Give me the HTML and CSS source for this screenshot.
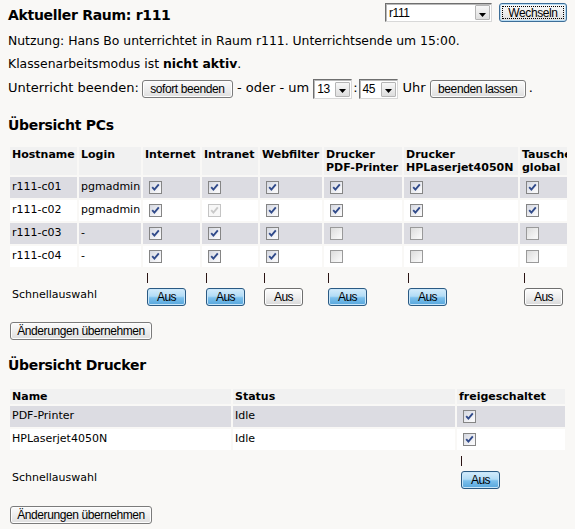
FILE: index.html
```html
<!DOCTYPE html>
<html lang="de">
<head>
<meta charset="utf-8">
<title>Aktueller Raum: r111</title>
<link rel="stylesheet" href="styles.css">
</head>
<body>
<div class="topbar">
  <h1 class="title">Aktueller Raum: r111</h1>
  <form class="roomform">
    <span class="combo combo-room"><span class="combo-text">r111</span><span class="combo-arrow"><svg width="7" height="4" viewBox="0 0 7 4"><path d="M0 0h7L3.5 4z" fill="#000"/></svg></span></span>
    <button type="button" class="btn btn-default">Wechseln</button>
  </form>
</div>
<p class="line line-first">Nutzung: Hans Bo unterrichtet in Raum r111. Unterrichtsende um 15:00.</p>
<p class="line line-second">Klassenarbeitsmodus ist <b>nicht aktiv</b>.</p>
<div class="endrow">
  <span class="txt">Unterricht beenden:</span>
  <button type="button" class="btn btn-end1">sofort beenden</button>
  <span class="txt txt-oder">- oder - um</span>
  <span class="combo combo-time"><span class="combo-text">13</span><span class="combo-arrow"><svg width="7" height="4" viewBox="0 0 7 4"><path d="M0 0h7L3.5 4z" fill="#000"/></svg></span></span>
  <span class="txt txt-colon">:</span>
  <span class="combo combo-time combo-min"><span class="combo-text">45</span><span class="combo-arrow"><svg width="7" height="4" viewBox="0 0 7 4"><path d="M0 0h7L3.5 4z" fill="#000"/></svg></span></span>
  <span class="txt txt-uhr">Uhr</span>
  <button type="button" class="btn btn-end2">beenden lassen</button>
  <span class="txt txt-dot">.</span>
</div>

<h2 class="section">Übersicht PCs</h2>
<table class="grid pcs">
  <thead>
    <tr>
      <th class="c-host">Hostname</th>
      <th class="c-login">Login</th>
      <th class="c-inet">Internet</th>
      <th class="c-intra">Intranet</th>
      <th class="c-web">Webfilter</th>
      <th class="c-pdf">Drucker<br>PDF-Printer</th>
      <th class="c-hp">Drucker<br>HPLaserjet4050N</th>
      <th class="c-tausch">Tauschen<br>global</th>
    </tr>
  </thead>
  <tbody>
    <tr class="odd">
      <td class="t">r111-c01</td><td class="t">pgmadmin</td>
      <td><input type="checkbox" class="cb" checked></td>
      <td><input type="checkbox" class="cb" checked></td>
      <td><input type="checkbox" class="cb" checked></td>
      <td><input type="checkbox" class="cb" checked></td>
      <td><input type="checkbox" class="cb" checked></td>
      <td><input type="checkbox" class="cb" checked></td>
    </tr>
    <tr class="even">
      <td class="t">r111-c02</td><td class="t">pgmadmin</td>
      <td><input type="checkbox" class="cb" checked></td>
      <td><input type="checkbox" class="cb" checked disabled></td>
      <td><input type="checkbox" class="cb" checked></td>
      <td><input type="checkbox" class="cb" checked></td>
      <td><input type="checkbox" class="cb" checked></td>
      <td><input type="checkbox" class="cb" checked></td>
    </tr>
    <tr class="odd">
      <td class="t">r111-c03</td><td class="t">-</td>
      <td><input type="checkbox" class="cb" checked></td>
      <td><input type="checkbox" class="cb" checked></td>
      <td><input type="checkbox" class="cb" checked></td>
      <td><input type="checkbox" class="cb"></td>
      <td><input type="checkbox" class="cb"></td>
      <td><input type="checkbox" class="cb"></td>
    </tr>
    <tr class="even">
      <td class="t">r111-c04</td><td class="t">-</td>
      <td><input type="checkbox" class="cb" checked></td>
      <td><input type="checkbox" class="cb" checked></td>
      <td><input type="checkbox" class="cb" checked></td>
      <td><input type="checkbox" class="cb"></td>
      <td><input type="checkbox" class="cb"></td>
      <td><input type="checkbox" class="cb"></td>
    </tr>
    <tr class="quickrow">
      <td class="quicklabel" colspan="2">Schnellauswahl</td>
      <td class="quick"><span class="tick"></span><button type="button" class="aus aus-on">Aus</button></td>
      <td class="quick"><span class="tick"></span><button type="button" class="aus aus-on">Aus</button></td>
      <td class="quick"><span class="tick"></span><button type="button" class="aus">Aus</button></td>
      <td class="quick"><span class="tick"></span><button type="button" class="aus aus-on">Aus</button></td>
      <td class="quick"><span class="tick"></span><button type="button" class="aus aus-on">Aus</button></td>
      <td class="quick"><span class="tick"></span><button type="button" class="aus">Aus</button></td>
    </tr>
  </tbody>
</table>
<button type="button" class="btn btn-apply">Änderungen übernehmen</button>

<h2 class="section section-printers">Übersicht Drucker</h2>
<table class="grid printers">
  <thead>
    <tr>
      <th class="p-name">Name</th>
      <th class="p-status">Status</th>
      <th class="p-free">freigeschaltet</th>
    </tr>
  </thead>
  <tbody>
    <tr class="odd">
      <td class="t">PDF-Printer</td><td class="t">Idle</td>
      <td><input type="checkbox" class="cb" checked></td>
    </tr>
    <tr class="even">
      <td class="t">HPLaserjet4050N</td><td class="t">Idle</td>
      <td><input type="checkbox" class="cb" checked></td>
    </tr>
    <tr class="quickrow">
      <td class="quicklabel">Schnellauswahl</td>
      <td></td>
      <td class="quick"><span class="tick"></span><button type="button" class="aus aus-on">Aus</button></td>
    </tr>
  </tbody>
</table>
<button type="button" class="btn btn-apply btn-apply2">Änderungen übernehmen</button>
</body>
</html>
```

FILE: styles.css
```css
html {
  overflow: hidden;
  background: #f9f8f6;
}

body {
  margin: 0 8px;
  font-family: "DejaVu Sans", Verdana, sans-serif;
  font-size: 13px;
  line-height: 16px;
  color: #000;
  background: #f9f8f6;
}

/* ---------- top bar ---------- */
.topbar {
  display: flex;
  justify-content: space-between;
  align-items: flex-start;
  padding-top: 3px;
  height: 19px;
}

.title {
  margin: 3px 0 0 0;
  font-size: 14px;
  line-height: 18px;
  letter-spacing: -0.3px;
  font-weight: bold;
}

.roomform {
  display: flex;
  align-items: flex-start;
  gap: 7px;
  margin: 0;
}

/* ---------- combo boxes ---------- */
.combo {
  display: inline-flex;
  align-items: center;
  justify-content: space-between;
  box-sizing: border-box;
  height: 20px;
  background: #fff;
  border-style: solid;
  border-width: 1px;
  border-color: #6f6f6f #d8d8d8 #d8d8d8 #6f6f6f;
  box-shadow: inset 1px 1px 0 #b9b9b9;
  font-family: "Liberation Sans", Arial, sans-serif;
  font-size: 12px;
  letter-spacing: -0.4px;
  padding: 0 1px 0 3px;
}

.combo-room {
  width: 107px;
  height: 19px;
}

.combo-time {
  width: 39px;
}

.combo-arrow {
  display: flex;
  align-items: center;
  justify-content: center;
  box-sizing: border-box;
  width: 15px;
  height: 15px;
  border: 1px solid #b5b5b5;
  border-radius: 1px;
  background: linear-gradient(#f7f7f7, #dedede);
  padding-top: 4px;
}

/* ---------- buttons ---------- */
.btn {
  box-sizing: border-box;
  height: 18px;
  padding: 0;
  border: 1px solid #7b7b7b;
  border-radius: 3px;
  background: linear-gradient(#fbfbfb, #eeeeee 50%, #dedede);
  box-shadow: inset 0 0 0 1px #fdfdfd;
  font-family: "Liberation Sans", Arial, sans-serif;
  font-size: 12px;
  line-height: 14px;
  color: #000;
  letter-spacing: -0.4px;
  white-space: nowrap;
}

.btn-default {
  width: 68px;
  height: 19px;
  border-color: #3d6e98;
  box-shadow: inset 0 0 0 1px #b9dcf3;
  outline: 1px dotted #000;
  outline-offset: -4px;
}

/* ---------- paragraphs ---------- */
.line {
  margin: 0;
  font-size: 12.4px;
}

.line-first {
  margin-top: 11px;
}

.line-second {
  margin-top: 7px;
}

.endrow {
  display: flex;
  align-items: center;
  height: 20px;
  margin-top: 7px;
}

.endrow .txt {
  padding-bottom: 3px;
}

.btn-end1 {
  width: 91px;
  margin-left: 3px;
  margin-right: 4px;
}

.combo-time {
  margin-left: 4px;
}

.txt-colon {
  margin-left: 1px;
}

.combo-min {
  margin-left: 1px;
}

.txt-uhr {
  margin-left: 5px;
}

.btn-end2 {
  width: 96px;
  margin-left: 4px;
}

.txt-dot {
  margin-left: 3px;
}

/* ---------- sections ---------- */
.section {
  margin: 17px 0 0 0;
  font-size: 14px;
  line-height: 18px;
  letter-spacing: -0.3px;
  font-weight: bold;
}

.section-printers {
  margin-top: 16px;
}

/* ---------- tables ---------- */
.grid {
  border-collapse: separate;
  border-spacing: 2px;
  margin-top: 11px;
  font-size: 11px;
  line-height: 13px;
}

.grid th {
  box-sizing: border-box;
  padding: 1px 2px;
  text-align: left;
  vertical-align: top;
  white-space: nowrap;
  font-weight: bold;
  background: #f1f1f1;
}

.grid td {
  padding: 1px 2px;
  vertical-align: top;
  white-space: nowrap;
}

.grid td.t {
  padding-top: 3px;
}

.grid tr.odd td {
  background: #dcdce2;
}

.grid tr.even td {
  background: #ffffff;
}

.pcs {
  table-layout: fixed;
  width: 585px;
}

.c-host { width: 67px; }
.c-login { width: 62px; }
.c-inet { width: 57px; }
.c-intra { width: 56px; }
.c-web { width: 62px; }
.c-pdf { width: 78px; }
.c-hp { width: 114px; }
.c-tausch { width: 71px; }

.printers {
  width: 100%;
  table-layout: fixed;
  margin-top: 13px;
}

.p-name { width: 221px; }
.p-status { width: 222px; }
.p-free { width: 108px; }

/* ---------- checkboxes ---------- */
.cb {
  -webkit-appearance: none;
  appearance: none;
  display: inline-block;
  box-sizing: border-box;
  width: 13px;
  height: 13px;
  margin: 3px 3px 3px 4px;
  vertical-align: top;
  border: 1px solid #9a9a9a;
  background: linear-gradient(135deg, #dcdcdc, #f6f6f6 80%);
}

.cb:checked {
  border-color: #858585;
  background:
    url("data:image/svg+xml,%3Csvg xmlns='http://www.w3.org/2000/svg' width='11' height='11' viewBox='0 0 11 11'%3E%3Cpath d='M2.2 5.2L4.4 7.6L8.8 2.4' fill='none' stroke='%23304a8a' stroke-width='1.9'/%3E%3C/svg%3E") no-repeat 0 0,
    linear-gradient(135deg, #d4d7e0, #f7f7f9 80%);
}

.cb:disabled {
  border-color: #c4c4c4;
  background: #f5f5f5;
}

.cb:checked:disabled {
  background:
    url("data:image/svg+xml,%3Csvg xmlns='http://www.w3.org/2000/svg' width='11' height='11' viewBox='0 0 11 11'%3E%3Cpath d='M2.2 5.2L4.4 7.6L8.8 2.4' fill='none' stroke='%23c9c9c9' stroke-width='1.9'/%3E%3C/svg%3E") no-repeat 0 0,
    #f7f7f7;
}

/* ---------- quick selection row ---------- */
.grid td.quicklabel {
  vertical-align: bottom;
  padding-bottom: 9px;
}

.grid td.quick {
  padding: 1px 2px;
}

.tick {
  display: block;
  width: 1px;
  height: 10px;
  margin: 3px 0 0 2px;
  background: #2b1414;
}

.aus {
  display: block;
  box-sizing: border-box;
  width: 39px;
  height: 18px;
  margin: 5px 0 3px 2px;
  padding: 0;
  border: 1px solid #6f6f6f;
  border-radius: 3px;
  background: linear-gradient(#fdfdfd, #eeeeee 50%, #d9d9d9);
  box-shadow: inset 0 0 0 1px #ffffff;
  font-family: "Liberation Sans", Arial, sans-serif;
  font-size: 12px;
  line-height: 14px;
  letter-spacing: -0.5px;
  color: #000;
}

.aus-on {
  border-color: #2a5a83;
  background: linear-gradient(#d4ecfb, #b2dcf6 45%, #7cc0ec 55%, #56a6dc);
  box-shadow: inset 0 0 0 1px #c8e6fa;
}

.btn-apply {
  display: block;
  width: 142px;
  margin: 10px 0 0 2px;
}

.btn-apply2 {
  margin-top: 11px;
}
```
